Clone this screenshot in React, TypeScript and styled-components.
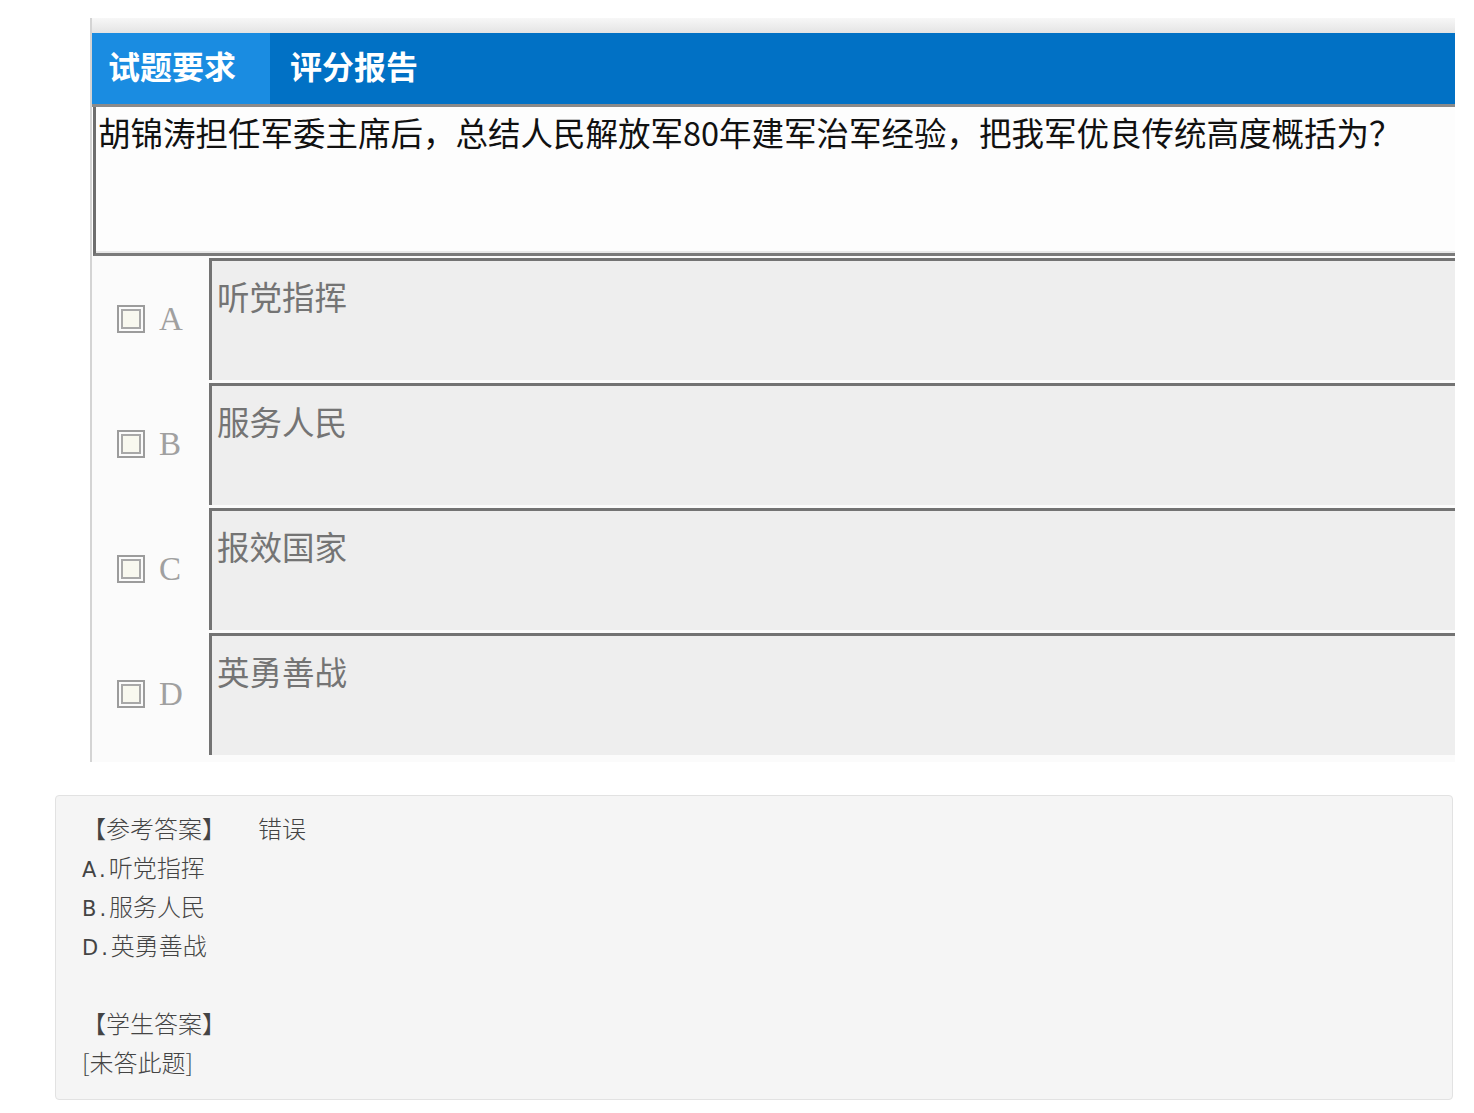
import React from "react";
import styled, { createGlobalStyle } from "styled-components";

const Global = createGlobalStyle`
  html, body { margin: 0; padding: 0; background: #ffffff; }
  body { font-family: "Noto Sans CJK SC", "Noto Sans", sans-serif; }
  * { box-sizing: border-box; }
`;

const Page = styled.div`
  width: 1474px;
  height: 1113px;
  padding-top: 18px;
  overflow: hidden;
`;

const Shot = styled.div`
  margin-left: 90px;
  width: 1365px;
  border-left: 2px solid #d4d4d4;
  display: flex;
  flex-direction: column;
`;

const TopStrip = styled.div`
  height: 15px;
  background: linear-gradient(#f7f7f7, #e4e4e4);
`;

const Header = styled.div`
  height: 74px;
  background: #0171c5;
  display: flex;
  align-items: stretch;
  border-bottom: 3px solid #8a8a8a;
`;

const Tab = styled.div<{ $active?: boolean }>`
  width: ${(p) => (p.$active ? "178px" : "auto")};
  padding-left: ${(p) => (p.$active ? "16px" : "20px")};
  padding-bottom: 8px;
  background: ${(p) => (p.$active ? "#1a8ce1" : "transparent")};
  color: #ffffff;
  font-size: 32px;
  font-weight: 700;
  display: flex;
  align-items: center;
`;

const Question = styled.div`
  height: 149px;
  margin-left: 1px;
  background: #fdfdfd;
  border-left: 3px solid #6e6e6e;
  border-bottom: 3px solid #7a7a7a;
  box-shadow: inset 0 -2px 0 #e8e8e8;
  padding: 6px 0 0 2px;
  font-size: 32.5px;
  line-height: 38px;
  color: #111111;
  white-space: nowrap;
`;

const Options = styled.div`
  background: #fbfbfb;
  padding-top: 2px;
  padding-bottom: 7px;
  display: flex;
  flex-direction: column;
  gap: 3px;
`;

const OptionRow = styled.div`
  display: flex;
  height: 122px;
`;

const Marker = styled.div`
  width: 117px;
  display: flex;
  align-items: center;
  padding-left: 25px;
  gap: 14px;
`;

const Box = styled.div`
  width: 28px;
  height: 28px;
  border: 2px solid #9c9c9c;
  padding: 2px;
  background: #fbfbfb;
`;

const BoxInner = styled.div`
  width: 100%;
  height: 100%;
  border: 2px solid #a8a8a8;
  background: #f8f8ef;
`;

const Letter = styled.span`
  font-family: "Liberation Serif", "DejaVu Serif", serif;
  font-size: 33px;
  color: #a0a0a0;
  line-height: 1;
`;

const OptionBox = styled.div`
  flex: 1;
  background: #eeeeee;
  border-top: 3px solid #737373;
  border-left: 3px solid #737373;
  padding: 16px 0 0 5px;
  font-size: 32.5px;
  line-height: 38px;
  color: #747474;
`;

const Panel = styled.div`
  margin: 33px 0 0 55px;
  width: 1398px;
  height: 305px;
  background: #f5f5f5;
  border: 1px solid #e2e2e2;
  border-radius: 4px;
  padding: 12px 26px 0 26px;
  font-family: "DejaVu Sans", "Noto Sans CJK SC", sans-serif;
  font-size: 21px;
  color: #444444;
`;

const Line = styled.div`
  height: 39px;
  line-height: 39px;
  white-space: pre;
`;

const Key = styled.span`
  letter-spacing: 3px;
`;

const Gap = styled.span`
  display: inline-block;
  width: 32px;
`;

const Han = styled.span`
  font-family: "Noto Sans CJK SC", sans-serif;
  font-size: 24px;
  font-weight: 300;
  line-height: 39px;
`;

const options = [
  { k: "A", t: "听党指挥" },
  { k: "B", t: "服务人民" },
  { k: "C", t: "报效国家" },
  { k: "D", t: "英勇善战" },
];

export default function App() {
  return (
    <Page>
      <Global />
      <Shot>
        <TopStrip />
        <Header>
          <Tab $active>试题要求</Tab>
          <Tab>评分报告</Tab>
        </Header>
        <Question>胡锦涛担任军委主席后，总结人民解放军80年建军治军经验，把我军优良传统高度概括为？</Question>
        <Options>
          {options.map((o) => (
            <OptionRow key={o.k}>
              <Marker>
                <Box>
                  <BoxInner />
                </Box>
                <Letter>{o.k}</Letter>
              </Marker>
              <OptionBox>{o.t}</OptionBox>
            </OptionRow>
          ))}
        </Options>
      </Shot>
      <Panel>
        <Line>
          <Han>【参考答案】</Han>
          <Gap />
          <Han>错误</Han>
        </Line>
        <Line><Key>A.</Key><Han>听党指挥</Han></Line>
        <Line><Key>B.</Key><Han>服务人民</Han></Line>
        <Line><Key>D.</Key><Han>英勇善战</Han></Line>
        <Line />
        <Line><Han>【学生答案】</Han></Line>
        <Line><Han>[未答此题]</Han></Line>
      </Panel>
    </Page>
  );
}
